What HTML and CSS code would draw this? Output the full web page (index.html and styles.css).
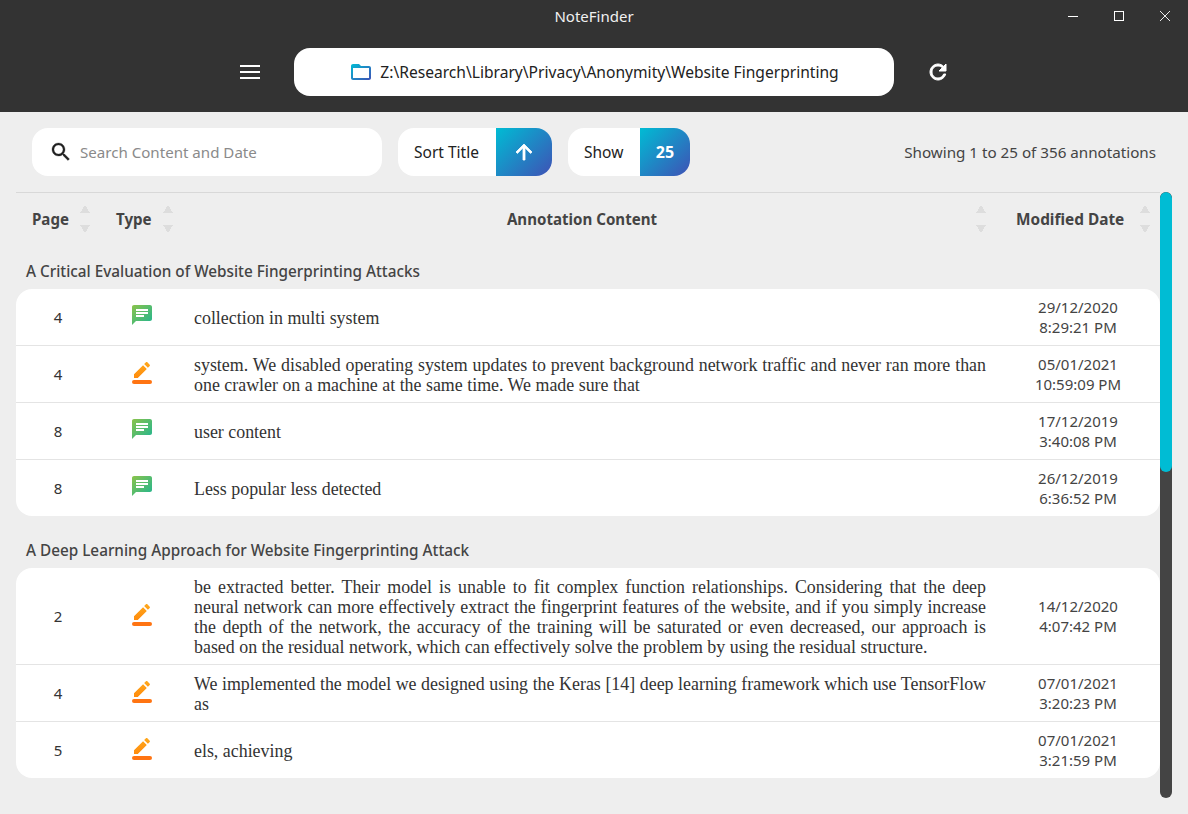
FILE: index.html
```html
<!DOCTYPE html>
<html lang="en">
<head>
    <meta charset="UTF-8">
    <meta name="viewport" content="width=device-width, initial-scale=1.0">
    <title>NoteFinder</title>
    <link rel="stylesheet" href="styles.css">
</head>
<body>
    <svg class="defs" width="0" height="0">
        <defs>
            <linearGradient id="gradGreen" x1="0" y1="0" x2="1" y2="1">
                <stop offset="0" stop-color="#8bc34a"/>
                <stop offset="1" stop-color="#1fb592"/>
            </linearGradient>
            <linearGradient id="gradOrange" x1="0.5" y1="0" x2="0.5" y2="1">
                <stop offset="0" stop-color="#ffa81c"/>
                <stop offset="1" stop-color="#ff8c0e"/>
            </linearGradient>
            <linearGradient id="gradBlue" x1="0" y1="0" x2="1" y2="1">
                <stop offset="0" stop-color="#00bcd4"/>
                <stop offset="1" stop-color="#3f51b5"/>
            </linearGradient>
            <symbol id="iconNote" viewBox="0 0 24 24">
                <path fill="url(#gradGreen)" fill-rule="evenodd" d="M20 2H4c-1.1 0-1.99.9-1.99 2L2 22l4-4h14c1.1 0 2-.9 2-2V4c0-1.1-.9-2-2-2zM14 14H6v-2h8v2zM18 11H6V9h12v2zM18 8H6V6h12v2z"/>
            </symbol>
            <symbol id="iconPen" viewBox="0 0 24 24">
                <path fill="url(#gradOrange)" d="M13.06 5.19l3.75 3.75L7.75 18H4v-3.75l9.06-9.06zm4.82 2.68-3.75-3.75 1.83-1.83c.39-.39 1.02-.39 1.41 0l2.34 2.34c.39.39.39 1.02 0 1.41l-1.83 1.83z"/>
                <rect x="2" y="20" width="20" height="4" rx="2" fill="#ff7412"/>
            </symbol>
        </defs>
    </svg>

    <header class="topbar">
        <div class="titlebar">
            <div></div>
            <div class="app-title">NoteFinder</div>
            <div class="win-controls">
                <span class="win-btn"><svg width="10" height="10" viewBox="0 0 10 10"><path d="M0 5.5h10" stroke="#fff"/></svg></span>
                <span class="win-btn"><svg width="10" height="10" viewBox="0 0 10 10"><rect x=".5" y=".5" width="9" height="9" fill="none" stroke="#fff"/></svg></span>
                <span class="win-btn"><svg width="10" height="10" viewBox="0 0 10 10"><path d="M0 0l10 10M10 0L0 10" stroke="#fff" stroke-width=".9"/></svg></span>
            </div>
        </div>
        <div class="pathrow">
            <span class="icon-btn">
                <svg width="20" height="14" viewBox="0 0 20 14"><path d="M0 0h20v2H0zM0 6h20v2H0zM0 12h20v2H0z" fill="#fff"/></svg>
            </span>
            <div class="pathbar">
                <svg width="24" height="24" viewBox="0 0 24 24"><path fill="url(#gradBlue)" d="M20 6h-8l-2-2H4c-1.1 0-1.99.9-1.99 2L2 18c0 1.1.9 2 2 2h16c1.1 0 2-.9 2-2V8c0-1.1-.9-2-2-2zm0 12H4V8h16v10z"/></svg>
                <span>Z:\Research\Library\Privacy\Anonymity\Website Fingerprinting</span>
            </div>
            <span class="icon-btn">
                <svg width="24" height="24" viewBox="0 0 24 24"><path fill="#fff" stroke="#fff" stroke-width="1" d="M17.65 6.35C16.2 4.9 14.21 4 12 4c-4.42 0-7.99 3.58-7.99 8s3.57 8 7.99 8c3.73 0 6.84-2.55 7.73-6h-2.08c-.82 2.33-3.04 4-5.65 4-3.31 0-6-2.69-6-6s2.69-6 6-6c1.66 0 3.14.69 4.22 1.78L13 11h7V4l-2.35 2.35z"/></svg>
            </span>
        </div>
    </header>

    <section class="toolbar">
        <div class="search">
            <svg width="24" height="24" viewBox="0 0 24 24"><path fill="#212121" stroke="#212121" stroke-width=".3" d="M15.5 14h-.79l-.28-.27C15.41 12.59 16 11.11 16 9.5 16 5.91 13.09 3 9.5 3S3 5.91 3 9.5 5.91 16 9.5 16c1.61 0 3.09-.59 4.23-1.57l.27.28v.79l5 4.99L20.49 19l-4.99-5zm-6 0C7.01 14 5 11.99 5 9.5S7.01 5 9.5 5 14 7.01 14 9.5 11.99 14 9.5 14z"/></svg>
            <span class="placeholder">Search Content and Date</span>
        </div>
        <div class="pill">
            <span class="pill-label sort-label">Sort Title</span>
            <span class="pill-btn sort-btn">
                <svg width="24" height="24" viewBox="0 0 24 24"><path fill="#fff" stroke="#fff" stroke-width=".8" d="M4 12l1.41 1.41L11 7.83V20h2V7.83l5.58 5.59L20 12l-8-8-8 8z"/></svg>
            </span>
        </div>
        <div class="pill">
            <span class="pill-label show-label">Show</span>
            <span class="pill-btn show-btn">25</span>
        </div>
        <div class="status">Showing 1 to 25 of 356 annotations</div>
    </section>

    <main class="content">
        <div class="list">
            <div class="head">
                <div class="hcell hpage">Page<span class="sorter"></span></div>
                <div class="hcell htype">Type<span class="sorter"></span></div>
                <div class="hcell hcontent"><span class="hcontent-text">Annotation Content</span><span class="sorter"></span></div>
                <div class="hcell hdate">Modified Date<span class="sorter"></span></div>
            </div>

            <h2 class="group-title">A Critical Evaluation of Website Fingerprinting Attacks</h2>
            <div class="card">
                <div class="row">
                    <div class="page-no">4</div>
                    <div class="type"><svg width="24" height="24"><use href="#iconNote"/></svg></div>
                    <div class="text">collection in multi system</div>
                    <div class="date">29/12/2020<br>8:29:21 PM</div>
                </div>
                <div class="row">
                    <div class="page-no">4</div>
                    <div class="type"><svg width="24" height="24"><use href="#iconPen"/></svg></div>
                    <div class="text">system. We disabled operating system updates to prevent background network traffic and never ran more than one crawler on a machine at the same time. We made sure that</div>
                    <div class="date">05/01/2021<br>10:59:09 PM</div>
                </div>
                <div class="row">
                    <div class="page-no">8</div>
                    <div class="type"><svg width="24" height="24"><use href="#iconNote"/></svg></div>
                    <div class="text">user content</div>
                    <div class="date">17/12/2019<br>3:40:08 PM</div>
                </div>
                <div class="row">
                    <div class="page-no">8</div>
                    <div class="type"><svg width="24" height="24"><use href="#iconNote"/></svg></div>
                    <div class="text">Less popular less detected</div>
                    <div class="date">26/12/2019<br>6:36:52 PM</div>
                </div>
            </div>

            <h2 class="group-title second">A Deep Learning Approach for Website Fingerprinting Attack</h2>
            <div class="card">
                <div class="row">
                    <div class="page-no">2</div>
                    <div class="type"><svg width="24" height="24"><use href="#iconPen"/></svg></div>
                    <div class="text">be extracted better. Their model is unable to fit complex function relationships. Considering that the deep neural network can more effectively extract the fingerprint features of the website, and if you simply increase the depth of the network, the accuracy of the training will be saturated or even decreased, our approach is based on the residual network, which can effectively solve the problem by using the residual structure.</div>
                    <div class="date">14/12/2020<br>4:07:42 PM</div>
                </div>
                <div class="row">
                    <div class="page-no">4</div>
                    <div class="type"><svg width="24" height="24"><use href="#iconPen"/></svg></div>
                    <div class="text">We implemented the model we designed using the Keras [14] deep learning framework which use TensorFlow as</div>
                    <div class="date">07/01/2021<br>3:20:23 PM</div>
                </div>
                <div class="row">
                    <div class="page-no">5</div>
                    <div class="type"><svg width="24" height="24"><use href="#iconPen"/></svg></div>
                    <div class="text">els, achieving</div>
                    <div class="date">07/01/2021<br>3:21:59 PM</div>
                </div>
            </div>
        </div>
        <div class="scrollbar"><div class="thumb"></div></div>
    </main>
</body>
</html>
```

FILE: styles.css
```css
html, body {
    margin: 0;
    height: 814px;
    overflow: hidden;
}
body {
    font-family: "Noto Sans", Arial, sans-serif;
    font-size: 15px;
    background-color: #eeeeee;
    color: #333;
}
svg {
    display: block;
}
.defs {
    position: absolute;
}

/* top dark bar */
.topbar {
    background-color: #333333;
    height: 112px;
}
.titlebar {
    display: grid;
    grid-template-columns: 1fr auto 1fr;
    align-items: center;
    height: 32px;
}
.app-title {
    color: #f0f0f0;
    font-size: 15px;
}
.win-controls {
    display: flex;
    justify-content: flex-end;
}
.win-btn {
    width: 46px;
    height: 32px;
    display: flex;
    align-items: center;
    justify-content: center;
}
.pathrow {
    margin-top: 16px;
    display: flex;
    justify-content: center;
    align-items: center;
    gap: 22px;
}
.icon-btn {
    width: 44px;
    height: 44px;
    display: flex;
    align-items: center;
    justify-content: center;
}
.pathbar {
    width: 600px;
    height: 48px;
    background-color: white;
    border-radius: 16px;
    display: flex;
    align-items: center;
    justify-content: center;
    gap: 7px;
    font-size: 15.6px;
    color: #222;
}

/* search, sort, show */
.toolbar {
    display: flex;
    align-items: center;
    gap: 16px;
    padding: 16px 32px;
    height: 48px;
}
.search {
    width: 350px;
    height: 48px;
    background-color: white;
    border-radius: 16px;
    display: flex;
    align-items: center;
    gap: 7px;
    padding-left: 17px;
    box-sizing: border-box;
}
.placeholder {
    color: #8a8a8a;
    font-size: 15.1px;
}
.pill {
    display: flex;
    height: 48px;
    background-color: white;
    border-radius: 16px;
    overflow: hidden;
}
.pill-label {
    display: flex;
    align-items: center;
    padding-left: 16px;
    box-sizing: border-box;
    color: #222;
    font-size: 15.5px;
}
.sort-label {
    width: 98px;
}
.show-label {
    width: 72px;
}
.pill-btn {
    display: flex;
    align-items: center;
    justify-content: center;
    color: white;
    font-weight: bold;
    font-size: 16px;
    background: linear-gradient(135deg, #00bcd4, #3f51b5);
}
.sort-btn {
    width: 56px;
}
.show-btn {
    width: 50px;
}
.status {
    margin-left: auto;
    color: #444;
    font-size: 15.2px;
}

/* table */
.content {
    display: flex;
    margin: 0 16px;
}
.list {
    width: 1144px;
    border-top: 1px solid #d8d8d8;
    box-sizing: border-box;
}
.scrollbar {
    width: 12px;
    height: 606px;
    background-color: #444444;
    border-radius: 6px;
    overflow: hidden;
}
.thumb {
    height: 280px;
    background-color: #00bcd4;
    border-radius: 6px;
}
.head {
    display: grid;
    grid-template-columns: 84px 84px 1fr 164px;
    height: 52px;
    font-weight: bold;
    font-size: 15.1px;
    color: #444;
}
.hcell {
    display: flex;
    align-items: center;
}
.hpage {
    padding-left: 16px;
    gap: 11px;
}
.htype {
    padding-left: 16px;
    gap: 11px;
}
.hcontent {
    padding-right: 10px;
}
.hcontent-text {
    flex: 1;
    padding-left: 4px;
    text-align: center;
}
.hdate {
    padding-left: 20px;
    gap: 16px;
    font-size: 15.4px;
}
.sorter {
    width: 10px;
    height: 28px;
    flex: none;
    background:
        linear-gradient(to top left, #ddd 50%, transparent 50%) 0 0 / 5px 8px no-repeat,
        linear-gradient(to top right, #ddd 50%, transparent 50%) 5px 0 / 5px 8px no-repeat,
        linear-gradient(to bottom left, #ddd 50%, transparent 50%) 0 100% / 5px 8px no-repeat,
        linear-gradient(to bottom right, #ddd 50%, transparent 50%) 5px 100% / 5px 8px no-repeat;
}
.group-title {
    margin: 0;
    padding-left: 10px;
    height: 44px;
    line-height: 53px;
    font-size: 15.3px;
    font-weight: 500;
    color: #444;
}
.group-title.second {
    margin-top: 16px;
    height: 36px;
    line-height: 36px;
}
.card {
    background-color: white;
    border-radius: 16px;
    overflow: hidden;
}
.row {
    display: grid;
    grid-template-columns: 84px 84px 1fr 164px;
    align-items: center;
    min-height: 56px;
    border-bottom: 1px solid #e4e4e4;
}
.row:last-child {
    border-bottom: none;
}
.page-no {
    text-align: center;
    color: #333;
}
.type {
    display: flex;
    justify-content: center;
    margin-top: -5px;
}
.text {
    padding: 9px 10px 7px;
    font-family: "Liberation Serif", serif;
    font-size: 17.9px;
    line-height: 20px;
    text-align: justify;
    color: #333;
}
.date {
    text-align: center;
    line-height: 20px;
    color: #444;
}
```
